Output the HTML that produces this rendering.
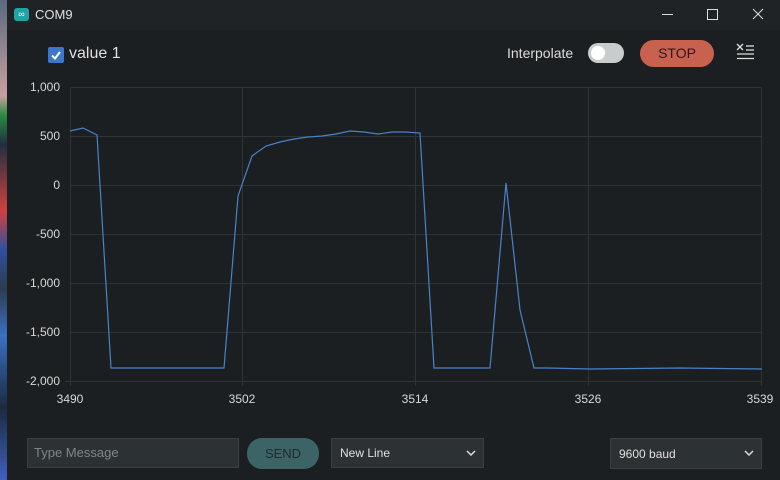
<!DOCTYPE html>
<html><head><style>
body{margin:0;width:780px;height:480px;overflow:hidden;background:#1b1f22;font-family:"Liberation Sans",sans-serif;position:relative}
.abs{position:absolute}
</style></head><body>
<div class="abs" style="left:0;top:0;width:7px;height:480px;background:linear-gradient(#5a6a80 0,#c9a0a0 20%,#2a8a40 24%,#203040 30%,#d04040 44%,#3050a0 52%,#2c3c50 60%,#3a70c0 70%,#1a2a40 85%,#4060c0 100%)"></div>
<div class="abs" style="left:7px;top:0;width:773px;height:30px;background:#202326"></div>
<div class="abs" style="left:14px;top:8px;width:15px;height:13px;border-radius:3px;background:#1fa5a5;color:#fff;font-size:9px;line-height:13px;text-align:center">∞</div>
<div class="abs" style="left:35px;top:7px;color:#e0e0e0;font-size:13px">COM9</div>
<svg class="abs" style="left:0;top:0" width="780" height="30"><g stroke="#ddd" stroke-width="1" fill="none">
<line x1="662" y1="14.5" x2="673" y2="14.5"/><rect x="707.5" y="9.5" width="10" height="10"/>
<line x1="753" y1="9" x2="763" y2="19"/><line x1="763" y1="9" x2="753" y2="19"/></g></svg>
<div class="abs" style="left:48px;top:47px;width:16px;height:16px;border-radius:2px;background:#3d78c8"></div>
<svg class="abs" style="left:48px;top:47px" width="16" height="16"><polyline points="4,8.5 7,11.5 12,5" fill="none" stroke="#fff" stroke-width="2"/></svg>
<div class="abs" style="left:69px;top:45px;color:#e0e0e0;font-size:16px">value 1</div>
<div class="abs" style="left:507px;top:45px;color:#ddd;font-size:14px">Interpolate</div>
<div class="abs" style="left:588px;top:43px;width:36px;height:20px;border-radius:10px;background:#c8cccc"></div>
<div class="abs" style="left:591px;top:46px;width:14px;height:14px;border-radius:7px;background:#fff"></div>
<div class="abs" style="left:640px;top:40px;width:74px;height:27px;border-radius:14px;background:#c8614d;color:#2a1a18;font-size:14px;line-height:27px;text-align:center">STOP</div>
<svg class="abs" style="left:736px;top:43px" width="20" height="18"><g stroke="#ddd" stroke-width="1.3" fill="none">
<line x1="1" y1="1" x2="7" y2="7"/><line x1="7" y1="1" x2="1" y2="7"/>
<line x1="10" y1="3" x2="18" y2="3"/><line x1="10" y1="7" x2="18" y2="7"/><line x1="1" y1="11" x2="18" y2="11"/><line x1="1" y1="15.5" x2="18" y2="15.5"/></g></svg>
<svg class="abs" style="left:0;top:0" width="780" height="420">
<g stroke="#2e3336" stroke-width="1">
<line x1="70" y1="87.5" x2="762" y2="87.5"/><line x1="70" y1="136.5" x2="762" y2="136.5"/><line x1="70" y1="185.5" x2="762" y2="185.5"/><line x1="70" y1="234.5" x2="762" y2="234.5"/><line x1="70" y1="283.5" x2="762" y2="283.5"/><line x1="70" y1="332.5" x2="762" y2="332.5"/><line x1="65" y1="381.5" x2="762" y2="381.5"/>
<line x1="70.5" y1="87" x2="70.5" y2="386"/><line x1="242.5" y1="87" x2="242.5" y2="386"/><line x1="415.5" y1="87" x2="415.5" y2="386"/><line x1="588.5" y1="87" x2="588.5" y2="386"/><line x1="761.5" y1="87" x2="761.5" y2="386"/>
</g>
<polyline fill="none" stroke="#4a82c8" stroke-width="1.2" points="70,131 83,128 97,135 111,368 125,368 180,368 224,368 238,196 252,156 266,146 280,142 294,139 308,137 322,136 336,134 350,131 364,132 378,134 392,132 406,132 420,133 434,368 448,368 490,368 506,183 520,310 534,368 548,368 590,369 680,368 762,369"/>
<g fill="#d8d8d8" font-size="12" font-family="Liberation Sans,sans-serif">
<text x="60" y="91" text-anchor="end">1,000</text><text x="60" y="140" text-anchor="end">500</text><text x="60" y="189" text-anchor="end">0</text><text x="60" y="238" text-anchor="end">-500</text><text x="60" y="287" text-anchor="end">-1,000</text><text x="60" y="336" text-anchor="end">-1,500</text><text x="60" y="385" text-anchor="end">-2,000</text>
<text x="70" y="403" text-anchor="middle">3490</text><text x="242" y="403" text-anchor="middle">3502</text><text x="415" y="403" text-anchor="middle">3514</text><text x="588" y="403" text-anchor="middle">3526</text><text x="760" y="403" text-anchor="middle">3539</text>
</g>
</svg>
<div class="abs" style="left:27px;top:438px;width:212px;height:30px;background:#2c3134;border:1px solid #3a3f42;box-sizing:border-box;color:#80868a;font-size:13px;line-height:28px;padding-left:6px">Type Message</div>
<div class="abs" style="left:247px;top:438px;width:72px;height:31px;border-radius:15px;background:#3c6466;color:#1e2a2c;font-size:13px;line-height:31px;text-align:center">SEND</div>
<div class="abs" style="left:331px;top:438px;width:153px;height:30px;background:#2c3134;border:1px solid #3a3f42;box-sizing:border-box;color:#e0e0e0;font-size:12px;line-height:28px;padding-left:8px">New Line</div>
<div class="abs" style="left:610px;top:438px;width:152px;height:31px;background:#2c3134;border:1px solid #3a3f42;box-sizing:border-box;color:#e0e0e0;font-size:12px;line-height:30px;padding-left:8px">9600 baud</div>
<svg class="abs" style="left:0;top:440px" width="780" height="30"><g stroke="#ddd" stroke-width="1.5" fill="none">
<polyline points="467,11 471,15 475,11"/><polyline points="745,11 749,15 753,11"/></g></svg>
</body></html>
